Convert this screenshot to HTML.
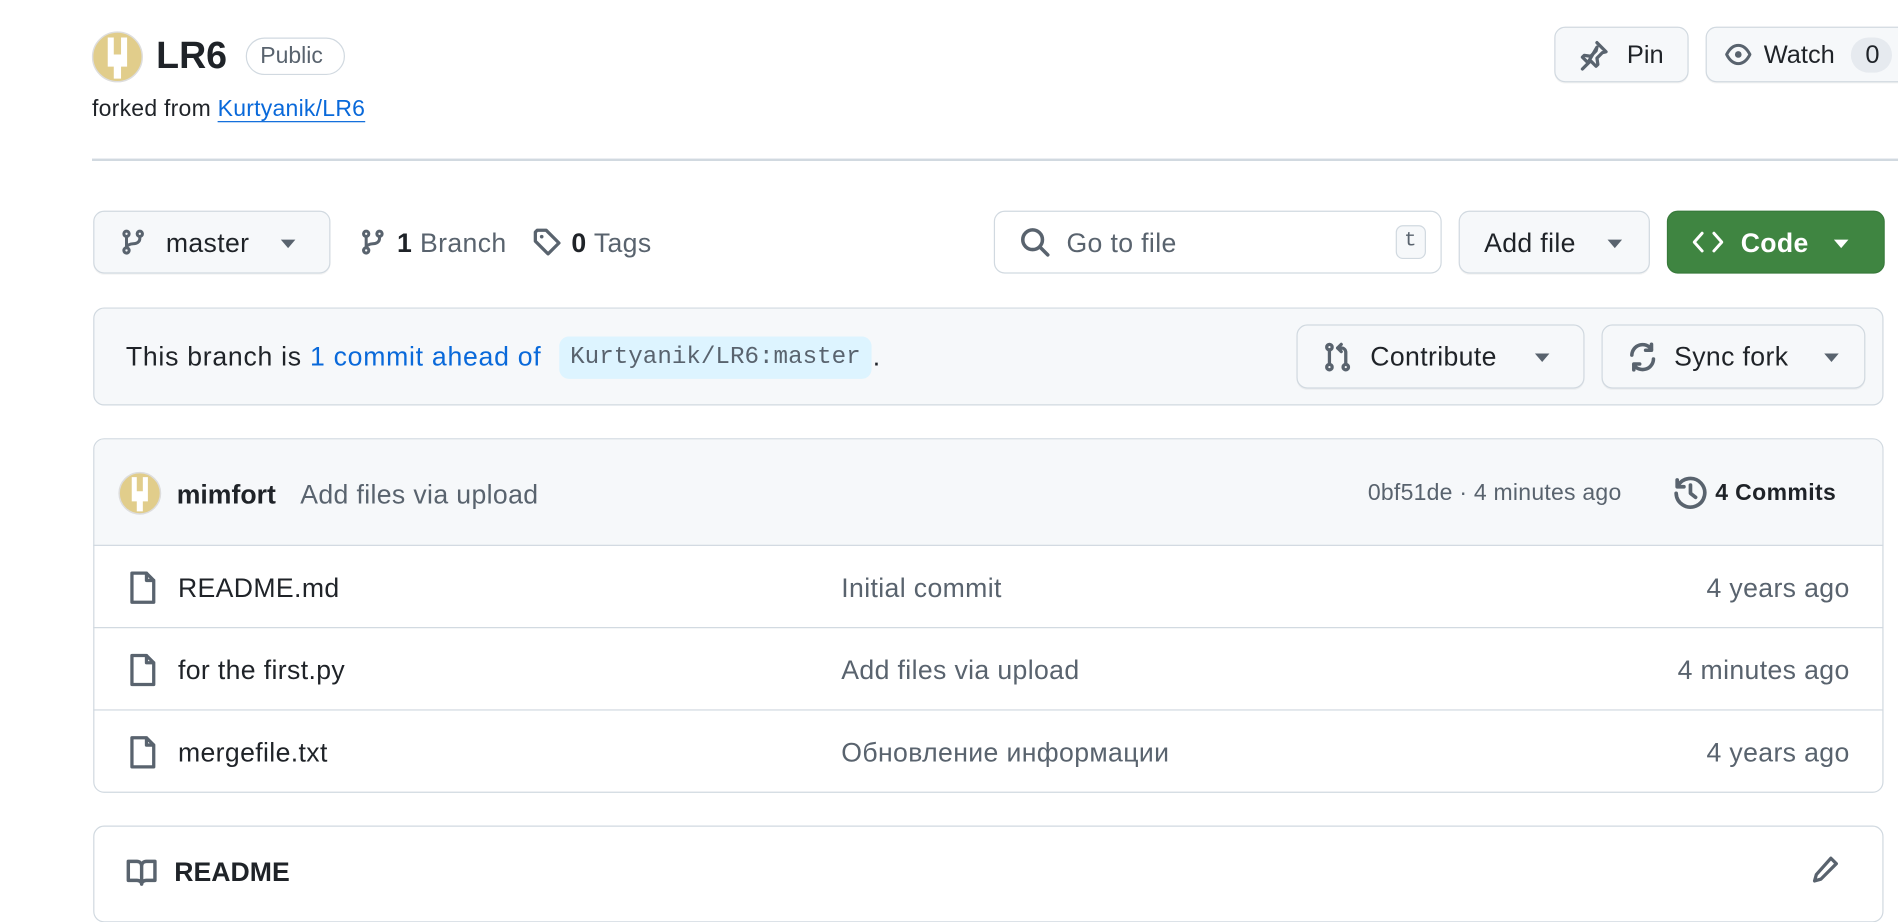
<!DOCTYPE html>
<html><head><meta charset="utf-8"><style>
*{box-sizing:border-box;margin:0;padding:0}
html,body{width:1898px;height:870px;overflow:hidden;background:#fff}
#w{position:absolute;left:0;top:0;width:1568px;height:719px;transform:scale(1.2105);transform-origin:0 0;font-family:"Liberation Sans","Noto Sans CJK SC",sans-serif;color:#1f2328}
.a{position:absolute}
.btn{position:absolute;background:#f6f8fa;border:1.5px solid #d1d9e0;border-radius:9px;box-shadow:0 1px 0 rgba(31,35,40,.05)}
.t{position:absolute;white-space:nowrap}
svg{position:absolute;overflow:visible}
.ic{fill:none;stroke:#59636e;stroke-width:1.8;stroke-linecap:round;stroke-linejoin:round}
.caret{position:absolute;width:0;height:0;border-left:6px solid transparent;border-right:6px solid transparent;border-top:7px solid #59636e}
.row{position:absolute;left:77px;width:1479px;height:68px;border-top:1.5px solid #d1d9e0}
.f{font-size:22px;letter-spacing:0.3px}
</style></head><body><div id="w">
<svg style="left:76px;top:26px" width="42" height="42" viewBox="0 0 42 42"><circle cx="21" cy="21" r="20.5" fill="#e1cd8b" stroke="#ddd" stroke-width="1.2"/><path d="M13 5h5v14h6V5h5v24h-5v10h-6V29h-5z" fill="#fff"/></svg>
<div class="t" style="left:129px;top:28px;font-size:31px;font-weight:bold">LR6</div>
<div class="a" style="left:203px;top:31px;width:82px;height:31px;border:1.5px solid #d1d9e0;border-radius:16px"></div>
<div class="t" style="left:215px;top:36px;font-size:19px;color:#59636e">Public</div>
<div class="t" style="left:76px;top:80px;font-size:19px;letter-spacing:0.2px">forked from <span style="color:#0969da;text-decoration:underline;text-underline-offset:4px">Kurtyanik/LR6</span></div>
<div class="btn" style="left:1284px;top:22px;width:111px;height:46px"></div>
<svg style="left:1305px;top:33px" width="24" height="24" viewBox="0 0 16 16"><path class="ic" stroke-width="1.2" d="M9.5 1.5l5 5-2 .5-3 3 .5 3.5-1 1-3-3-4.5 4.5M4.5 12.5l-3-3 1-1 3.5.5 3-3 .5-2z"/></svg>
<div class="t" style="left:1344px;top:34px;font-size:21px">Pin</div>
<div class="btn" style="left:1409px;top:22px;width:170px;height:46px"></div>
<svg style="left:1424px;top:34px" width="24" height="22" viewBox="0 0 16 16"><path class="ic" stroke-width="1.3" d="M1 8c2-4 4.5-5.5 7-5.5S13 4 15 8c-2 4-4.5 5.5-7 5.5S3 12 1 8z"/><circle cx="8" cy="8" r="2" fill="#59636e"/></svg>
<div class="t" style="left:1457px;top:34px;font-size:21px">Watch</div>
<div class="a" style="left:1529px;top:31px;width:34px;height:29px;border-radius:15px;background:#e6eaef"></div>
<div class="t" style="left:1541px;top:34px;font-size:21px">0</div>
<div class="a" style="left:76px;top:131px;width:1492px;height:2px;background:#d1d9e0"></div>
<div class="btn" style="left:77px;top:174px;width:196px;height:52px"></div>
<svg style="left:99px;top:188px" width="22" height="24" viewBox="0 0 16 16"><g class="ic" stroke-width="1.3"><circle cx="4" cy="3" r="1.6"/><circle cx="12" cy="3" r="1.6"/><circle cx="4" cy="13" r="1.6"/><path d="M4 4.6v6.8M12 4.6v1.4c0 2-2 3-4 3s-4 1-4 2.4"/></g></svg>
<div class="t f" style="left:137px;top:188px">master</div>
<div class="caret" style="left:232px;top:198px"></div>
<svg style="left:297px;top:188px" width="22" height="24" viewBox="0 0 16 16"><g class="ic" stroke-width="1.3"><circle cx="4" cy="3" r="1.6"/><circle cx="12" cy="3" r="1.6"/><circle cx="4" cy="13" r="1.6"/><path d="M4 4.6v6.8M12 4.6v1.4c0 2-2 3-4 3s-4 1-4 2.4"/></g></svg>
<div class="t f" style="left:328px;top:188px;color:#59636e"><b style="color:#1f2328">1</b> Branch</div>
<svg style="left:440px;top:188px" width="24" height="24" viewBox="0 0 16 16"><path class="ic" stroke-width="1.3" d="M1.5 2.5v5l7 7 6-6-7-7h-5z"/><circle cx="5" cy="5" r="1" fill="#59636e"/></svg>
<div class="t f" style="left:472px;top:188px;color:#59636e"><b style="color:#1f2328">0</b> Tags</div>
<div class="a" style="left:821px;top:174px;width:370px;height:52px;border:1.5px solid #d1d9e0;border-radius:9px;background:#fff"></div>
<svg style="left:842px;top:187px" width="26" height="26" viewBox="0 0 16 16"><g class="ic" stroke-width="1.3"><circle cx="6.8" cy="6.8" r="5"/><path d="M10.5 10.5l4 4"/></g></svg>
<div class="t f" style="left:881px;top:188px;color:#59636e">Go to file</div>
<div class="a" style="left:1153px;top:186px;width:25px;height:28px;border:1.5px solid #d1d9e0;border-radius:6px;background:#f6f8fa"></div>
<div class="t" style="left:1160px;top:190px;font-size:17px;font-family:'Liberation Mono',monospace;color:#59636e">t</div>
<div class="btn" style="left:1205px;top:174px;width:158px;height:52px"></div>
<div class="t f" style="left:1226px;top:188px">Add file</div>
<div class="caret" style="left:1328px;top:198px"></div>
<div class="a" style="left:1377px;top:174px;width:180px;height:52px;border-radius:9px;background:#3f8541;border:1px solid #387a3b"></div>
<svg style="left:1398px;top:190px" width="26" height="20" viewBox="0 0 16 12"><path fill="none" stroke="#fff" stroke-width="1.5" stroke-linecap="round" stroke-linejoin="round" d="M5 1.5L1 6l4 4.5M11 1.5L15 6l-4 4.5"/></svg>
<div class="t f" style="left:1438px;top:188px;color:#fff;font-weight:bold">Code</div>
<div class="caret" style="left:1515px;top:198px;border-top-color:#fff"></div>
<div class="a" style="left:77px;top:254px;width:1479px;height:81px;background:#f6f8fa;border:1.5px solid #d1d9e0;border-radius:9px"></div>
<div class="t" style="left:104px;top:282px;font-size:22px;letter-spacing:0.6px">This branch is <span style="color:#0969da">1 commit ahead of</span></div>
<div class="a" style="left:462px;top:278px;width:258px;height:35px;border-radius:8px;background:#ddf4ff"></div>
<div class="t" style="left:471px;top:284px;font-size:20px;font-family:'Liberation Mono',monospace;color:#59636e">Kurtyanik/LR6:master</div>
<div class="t" style="left:721px;top:282px;font-size:22px">.</div>
<div class="btn" style="left:1071px;top:268px;width:238px;height:53px;background:#f6f8fa"></div>
<svg style="left:1093px;top:282px" width="24" height="26" viewBox="0 0 16 16"><g class="ic" stroke-width="1.3"><circle cx="3.5" cy="2.5" r="1.5"/><circle cx="3.5" cy="13.5" r="1.5"/><circle cx="12.5" cy="13.5" r="1.5"/><path d="M3.5 4v8M12.5 12V5.5c0-1.5-1-2.5-2.5-2.5H8M10 1l-2 2 2 2"/></g></svg>
<div class="t f" style="left:1132px;top:282px">Contribute</div>
<div class="caret" style="left:1268px;top:292px"></div>
<div class="btn" style="left:1323px;top:268px;width:218px;height:53px;background:#f6f8fa"></div>
<svg style="left:1344px;top:282px" width="26" height="26" viewBox="0 0 16 16"><path class="ic" stroke-width="1.3" d="M2.5 7A5.5 5.5 0 0 1 12.5 4M13.5 9A5.5 5.5 0 0 1 3.5 12M12.5 1.5V4.5H9.5M3.5 14.5V11.5H6.5"/></svg>
<div class="t f" style="left:1383px;top:282px">Sync fork</div>
<div class="caret" style="left:1507px;top:292px"></div>
<div class="a" style="left:77px;top:362px;width:1479px;height:293px;border:1.5px solid #d1d9e0;border-radius:9px;overflow:hidden">
  <div class="a" style="left:0;top:0;width:100%;height:88px;background:#f6f8fa"></div>
</div>
<svg style="left:98px;top:390px" width="35" height="35" viewBox="0 0 42 42"><circle cx="21" cy="21" r="20.5" fill="#e1cd8b" stroke="#ddd" stroke-width="1.5"/><path d="M13 5h5v14h6V5h5v24h-5v10h-6V29h-5z" fill="#fff"/></svg>
<div class="t f" style="left:146px;top:396px;font-weight:bold;letter-spacing:0">mimfort</div>
<div class="t f" style="left:248px;top:396px;color:#59636e">Add files via upload</div>
<div class="t" style="left:1130px;top:397px;font-size:19px;color:#59636e;letter-spacing:0.2px">0bf51de · 4 minutes ago</div>
<svg style="left:1383px;top:394px" width="27" height="27" viewBox="0 0 16 16"><path class="ic" stroke-width="1.3" d="M1.8 4.5A7 7 0 1 1 1 8M1.5 1.5v3.3h3.3M8 4v4l2.5 2"/></svg>
<div class="t" style="left:1417px;top:397px;font-size:19px;font-weight:bold;letter-spacing:0.3px">4 Commits</div>
<div class="row" style="top:450px"></div>
<div class="row" style="top:518px"></div>
<div class="row" style="top:586px"></div>
<svg style="left:106px;top:472px" width="24" height="27" viewBox="0 0 16 18"><path class="ic" stroke-width="1.3" d="M2 1h8l4 4v12H2zM10 1v4h4"/></svg>
<div class="t f" style="left:147px;top:473px">README.md</div>
<div class="t f" style="left:695px;top:473px;color:#59636e">Initial commit</div>
<div class="t f" style="left:1528px;top:473px;color:#59636e;transform:translateX(-100%)">4 years ago</div>
<svg style="left:106px;top:540px" width="24" height="27" viewBox="0 0 16 18"><path class="ic" stroke-width="1.3" d="M2 1h8l4 4v12H2zM10 1v4h4"/></svg>
<div class="t f" style="left:147px;top:541px">for the first.py</div>
<div class="t f" style="left:695px;top:541px;color:#59636e">Add files via upload</div>
<div class="t f" style="left:1528px;top:541px;color:#59636e;transform:translateX(-100%)">4 minutes ago</div>
<svg style="left:106px;top:608px" width="24" height="27" viewBox="0 0 16 18"><path class="ic" stroke-width="1.3" d="M2 1h8l4 4v12H2zM10 1v4h4"/></svg>
<div class="t f" style="left:147px;top:609px">mergefile.txt</div>
<div class="t f" style="left:695px;top:609px;color:#59636e">Обновление информации</div>
<div class="t f" style="left:1528px;top:609px;color:#59636e;transform:translateX(-100%)">4 years ago</div>
<div class="a" style="left:77px;top:682px;width:1479px;height:80px;border:1.5px solid #d1d9e0;border-radius:9px"></div>
<svg style="left:104px;top:710px" width="26" height="22" viewBox="0 0 16 14"><path class="ic" stroke-width="1.4" d="M1 1h4.5C7 1 8 2 8 3.5V13C8 12 7 11 5.5 11H1zM15 1h-4.5C9 1 8 2 8 3.5V13c0-1 1-2 2.5-2H15z"/></svg>
<div class="t" style="left:144px;top:708px;font-size:22px;font-weight:bold">README</div>
<svg style="left:1496px;top:706px" width="24" height="24" viewBox="0 0 16 16"><path class="ic" stroke-width="1.4" d="M11 2l3 3-8.5 8.5L2 14.5l1-3.5z"/></svg>
</div></body></html>
